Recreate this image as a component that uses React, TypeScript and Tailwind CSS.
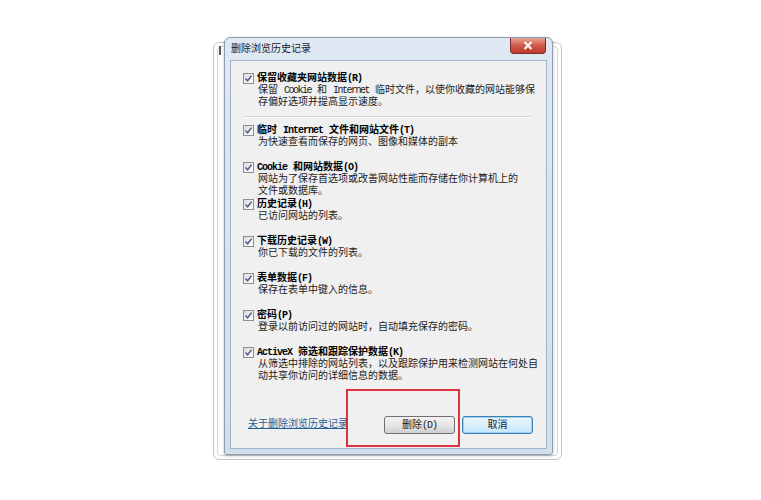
import React from 'react';

const font = { fontFamily: '"Liberation Mono", "Noto Sans CJK SC", monospace' };

function L({ children }: { children: React.ReactNode }) {
  // half-width latin, like SimSun
  return <span className="tracking-[-1px]">{children}</span>;
}

function S({ children }: { children: React.ReactNode }) {
  // narrower latin inside descriptions
  return <span className="tracking-[-1.5px]">{children}</span>;
}

function Check() {
  return (
    <div className="mt-[1px] flex h-[11px] w-[11px] shrink-0 items-center justify-center border border-[#8e8f8f] bg-gradient-to-br from-[#dcdcdc] to-[#ffffff]">
      <svg width="9" height="9" viewBox="0 0 9 9">
        <path d="M1.5 4.5 L3.6 6.8 L7.6 1.6" fill="none" stroke="#4c5f86" strokeWidth="1.5" />
      </svg>
    </div>
  );
}

type Item = { label: React.ReactNode; desc: React.ReactNode[] };

const items: Item[] = [
  {
    label: <>临时 <L>Internet</L> 文件和网站文件<L>(T)</L></>,
    desc: ['为快速查看而保存的网页、图像和媒体的副本'],
  },
  {
    label: <><L>Cookie</L> 和网站数据<L>(O)</L></>,
    desc: ['网站为了保存首选项或改善网站性能而存储在你计算机上的', '文件或数据库。'],
  },
  { label: <>历史记录<L>(H)</L></>, desc: ['已访问网站的列表。'] },
  { label: <>下载历史记录<L>(W)</L></>, desc: ['你已下载的文件的列表。'] },
  { label: <>表单数据<L>(F)</L></>, desc: ['保存在表单中键入的信息。'] },
  { label: <>密码<L>(P)</L></>, desc: ['登录以前访问过的网站时，自动填充保存的密码。'] },
  {
    label: <><L>ActiveX</L> 筛选和跟踪保护数据<L>(K)</L></>,
    desc: ['从筛选中排除的网站列表，以及跟踪保护用来检测网站在何处自', '动共享你访问的详细信息的数据。'],
  },
];

function Option({ item, className = '' }: { item: Item; className?: string }) {
  return (
    <div className={`flex gap-[3px] ${className}`}>
      <Check />
      <div className="flex flex-col whitespace-pre text-[10px] text-[#1b1b1b]">
        <div className="h-[13px] leading-[13px] font-bold text-black">{item.label}</div>
        {item.desc.map((d, i) => (
          <div key={i} className="h-[12px] pl-[1px] leading-[12px]">
            {d}
          </div>
        ))}
      </div>
    </div>
  );
}

export default function App() {
  return (
    <div className="relative h-[500px] w-[761px] overflow-hidden bg-white" style={font}>
      {/* window behind */}
      <div className="absolute left-[213px] top-[42px] h-[418px] w-[349px] rounded-[6px] border border-[#c4c4c4] bg-white p-[3px]">
        <div className="h-full w-full rounded-[4px] border border-[#d4d4d4]" />
        <div className="absolute left-[5px] top-[3px] h-[9px] w-[2px] bg-[#555]" />
      </div>

      {/* dialog */}
      <div className="absolute left-[224px] top-[37px] flex h-[418px] w-[329px] flex-col rounded-t-[6px] rounded-b-[3px] border border-[#8d9cb0] bg-gradient-to-b from-[#dfe8f3] to-[#d3dfed] shadow-[0_1px_3px_rgba(0,0,0,0.25)]">
        <div className="relative flex h-[22px] shrink-0 items-center pl-[6px]">
          <span className="text-[10px] text-[#1a1a1a]">删除浏览历史记录</span>
          <div className="absolute right-[6px] top-0 flex h-[16px] w-[36px] items-center justify-center rounded-b-[4px] border border-t-0 border-[#7a2d28] bg-gradient-to-b from-[#e8a397] via-[#cf5a4b] to-[#c0392b]">
            <svg width="10" height="9" viewBox="0 0 10 9">
              <path d="M1.5 1 L8.5 8 M8.5 1 L1.5 8" stroke="#fff" strokeWidth="2" />
            </svg>
          </div>
        </div>

        <div className="mx-[5px] mb-[5px] flex flex-1 flex-col border border-[#a3b3c6] bg-[#f0f0f0] pl-[12px] pr-[13px] pt-[11px]">
          <Option
            item={{
              label: <>保留收藏夹网站数据<L>(R)</L></>,
              desc: [
                <>保留 <S>Cookie</S> 和 <S>Internet</S> 临时文件，以使你收藏的网站能够保</>,
                '存偏好选项并提高显示速度。',
              ],
            }}
          />
          <div className="mb-[6px] mt-[7px] mr-[2px] h-[2px] border-t border-b border-t-[#d5d5d5] border-b-white" />
          {items.map((it, i) => (
            <Option key={i} item={it} className="h-[37px]" />
          ))}

          <div className="mt-auto flex items-center pb-[14px] pl-[5px]">
            <span className="text-[10px] leading-[12px] text-[#1f5f9a] underline">关于删除浏览历史记录</span>
            <div className="ml-auto flex gap-[7px]">
              <button className="flex h-[18px] w-[71px] items-center justify-center rounded-[3px] border border-[#707070] bg-gradient-to-b from-[#f2f2f2] via-[#e6e6e6] to-[#d0d0d0] text-[10px] text-[#1b1b1b]">
                删除<L>(D)</L>
              </button>
              <button className="flex h-[18px] w-[71px] items-center justify-center rounded-[3px] border border-[#3c7fb1] bg-gradient-to-b from-[#eaf6fd] via-[#d9f0fc] to-[#bee6fd] text-[10px] text-[#1b1b1b] shadow-[inset_0_0_0_1px_#9fd2f2]">
                取消
              </button>
            </div>
          </div>
        </div>
      </div>

      {/* red highlight */}
      <div className="absolute left-[346px] top-[389px] h-[58px] w-[114px] border-2 border-[#d8343d]" />
    </div>
  );
}
